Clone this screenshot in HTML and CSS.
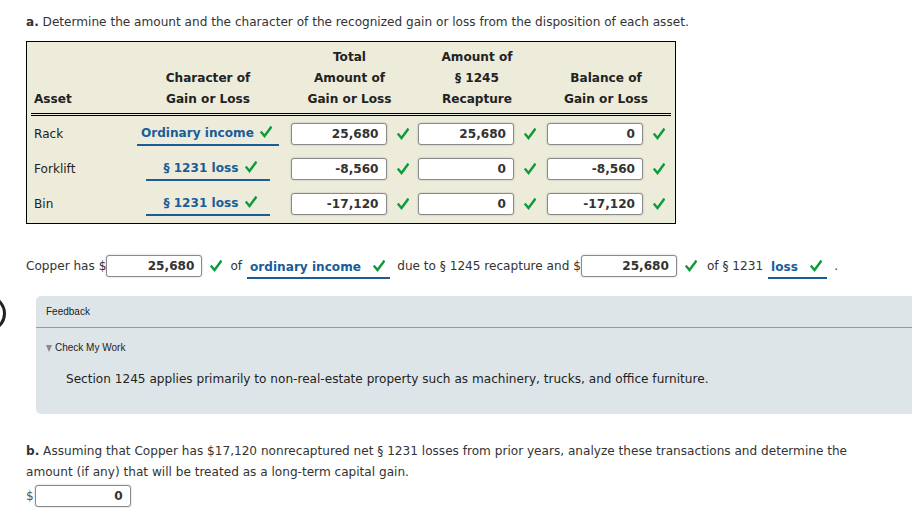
FILE: index.html
```html
<!DOCTYPE html>
<html>
<head>
<meta charset="utf-8">
<link rel="stylesheet" href="styles.css">
</head>
<body>
<div class="ring"></div>
<p class="q"><b>a.</b> Determine the amount and the character of the recognized gain or loss from the disposition of each asset.</p>

<div class="box">
  <table class="grid">
    <colgroup>
      <col class="c1"><col class="c2"><col class="c3"><col class="c4"><col class="c5">
    </colgroup>
    <thead>
      <tr>
        <th class="left"><br><br>Asset</th>
        <th><br>Character of<br>Gain or Loss</th>
        <th>Total<br>Amount of<br>Gain or Loss</th>
        <th>Amount of<br>§ 1245<br>Recapture</th>
        <th><br>Balance of<br>Gain or Loss</th>
      </tr>
    </thead>
    <tbody>
      <tr>
        <td class="left">Rack</td>
        <td><span class="dd wide">Ordinary income <svg class="ck" viewBox="0 0 12 12"><path d="M1.5 6.5 L4.5 10 L10.8 1.5"/></svg></span></td>
        <td><span class="inp">25,680</span><svg class="ck" viewBox="0 0 12 12"><path d="M1.5 6.5 L4.5 10 L10.8 1.5"/></svg></td>
        <td><span class="inp">25,680</span><svg class="ck" viewBox="0 0 12 12"><path d="M1.5 6.5 L4.5 10 L10.8 1.5"/></svg></td>
        <td><span class="inp">0</span><svg class="ck" viewBox="0 0 12 12"><path d="M1.5 6.5 L4.5 10 L10.8 1.5"/></svg></td>
      </tr>
      <tr>
        <td class="left">Forklift</td>
        <td><span class="dd">§ 1231 loss <svg class="ck" viewBox="0 0 12 12"><path d="M1.5 6.5 L4.5 10 L10.8 1.5"/></svg></span></td>
        <td><span class="inp">-8,560</span><svg class="ck" viewBox="0 0 12 12"><path d="M1.5 6.5 L4.5 10 L10.8 1.5"/></svg></td>
        <td><span class="inp">0</span><svg class="ck" viewBox="0 0 12 12"><path d="M1.5 6.5 L4.5 10 L10.8 1.5"/></svg></td>
        <td><span class="inp">-8,560</span><svg class="ck" viewBox="0 0 12 12"><path d="M1.5 6.5 L4.5 10 L10.8 1.5"/></svg></td>
      </tr>
      <tr>
        <td class="left">Bin</td>
        <td><span class="dd">§ 1231 loss <svg class="ck" viewBox="0 0 12 12"><path d="M1.5 6.5 L4.5 10 L10.8 1.5"/></svg></span></td>
        <td><span class="inp">-17,120</span><svg class="ck" viewBox="0 0 12 12"><path d="M1.5 6.5 L4.5 10 L10.8 1.5"/></svg></td>
        <td><span class="inp">0</span><svg class="ck" viewBox="0 0 12 12"><path d="M1.5 6.5 L4.5 10 L10.8 1.5"/></svg></td>
        <td><span class="inp">-17,120</span><svg class="ck" viewBox="0 0 12 12"><path d="M1.5 6.5 L4.5 10 L10.8 1.5"/></svg></td>
      </tr>
    </tbody>
  </table>
</div>

<div class="sentence">
  <span>Copper has $</span><span class="inp">25,680</span><svg class="ck" viewBox="0 0 12 12"><path d="M1.5 6.5 L4.5 10 L10.8 1.5"/></svg>
  <span class="t-of">of</span>
  <span class="dd inline">ordinary income <svg class="ck" viewBox="0 0 12 12"><path d="M1.5 6.5 L4.5 10 L10.8 1.5"/></svg></span>
  <span class="t-due">due to § 1245 recapture and $</span><span class="inp">25,680</span><svg class="ck" viewBox="0 0 12 12"><path d="M1.5 6.5 L4.5 10 L10.8 1.5"/></svg>
  <span class="t-of2">of § 1231</span>
  <span class="dd inline short">loss <svg class="ck" viewBox="0 0 12 12"><path d="M1.5 6.5 L4.5 10 L10.8 1.5"/></svg></span>
  <span class="dot">.</span>
</div>

<div class="feedback">
  <div class="fb-title">Feedback</div>
  <div class="fb-rule"></div>
  <div class="fb-check"><span class="tri"></span>Check My Work</div>
  <p class="fb-text">Section 1245 applies primarily to non-real-estate property such as machinery, trucks, and office furniture.</p>
</div>

<p class="qb"><b>b.</b> Assuming that Copper has $17,120 nonrecaptured net § 1231 losses from prior years, analyze these transactions and determine the amount (if any) that will be treated as a long-term capital gain.</p>
<div class="answer"><span>$</span><span class="inp">0</span></div>
</body>
</html>
```

FILE: styles.css
```css
html { overflow: hidden; }
body {
  margin: 0;
  padding: 12px 0 0 26px;
  font-family: "DejaVu Sans", Verdana, sans-serif;
  font-size: 12.1px;
  color: #333;
  background: #fff;
  position: relative;
}
p { margin: 0; }
.q { line-height: 21px; height: 21px; }
b { font-weight: bold; color: #333; }

.box {
  margin-top: 8px;
  width: 640px;
  border: 1px solid #000;
  background: #edecdb;
  padding: 5px 4px 2px 4px;
}
.grid {
  border-collapse: collapse;
  table-layout: fixed;
  width: 640px;
}
.c1 { width: 99px; }
.c2 { width: 156px; }
.c3 { width: 127px; }
.c4 { width: 128px; }
.c5 { width: 130px; }
.grid th {
  font-weight: bold;
  color: #222;
  text-align: center;
  line-height: 21px;
  padding: 0 0 3px 0;
  border-bottom: 3px double #000;
  vertical-align: bottom;
}
.grid td {
  height: 35px;
  padding: 0;
  text-align: center;
  vertical-align: middle;
  white-space: nowrap;
}
.grid .left { text-align: left; padding-left: 3px; }
.grid td.left { color: #222; }

.inp {
  display: inline-block;
  box-sizing: border-box;
  width: 96px;
  height: 22px;
  line-height: 20px;
  border: 1px solid #8a8a8a;
  border-radius: 3px;
  background: #fff;
  box-shadow: 0 0 2px rgba(0,0,0,0.25);
  text-align: right;
  padding-right: 7px;
  font-weight: bold;
  color: #333;
  vertical-align: middle;
}
.ck {
  width: 12px;
  height: 12px;
  vertical-align: middle;
  margin-left: 10px;
  fill: none;
}
.ck path {
  stroke: #0d9b3a;
  stroke-width: 2.4;
  stroke-linecap: square;
  stroke-linejoin: miter;
}
.dd {
  display: inline-block;
  font-weight: bold;
  color: #1b5c98;
  border-bottom: 2px solid #1b5c98;
  padding: 0 13px 2px 17px;
  line-height: 18px;
  margin-top: 3px;
}
.dd.wide { padding: 0 7px 2px 4px; }
.dd .ck { margin-left: 2px; vertical-align: -1px; }

.sentence {
  margin-top: 30px;
  height: 24px;
  line-height: 24px;
  white-space: nowrap;
  display: flex;
  align-items: center;
}
.sentence .ck { margin-left: 8px; }
.t-of { margin-left: 8px; }
.sentence .dd.inline { padding: 0 5px 2px 3px; margin-left: 5px; margin-top: 6px; line-height: 16px; }
.t-due { margin-left: 7px; }
.t-of2 { margin-left: 10px; }
.sentence .dd.short { padding: 0 5px 2px 3px; }
.dot { margin-left: 7px; }

.ring {
  position: absolute;
  left: -31px;
  top: 295px;
  width: 31px;
  height: 31px;
  border: 3px solid #222;
  border-radius: 50%;
}

.feedback {
  margin: 18px -40px 0 10px;
  background: #dee5e8;
  border-radius: 5px;
  height: 118px;
  font-family: "Liberation Sans", Arial, sans-serif;
  color: #222;
}
.fb-title {
  font-size: 10px;
  padding: 11px 0 0 10px;
  line-height: 10px;
  height: 20px;
}
.fb-rule { height: 1px; background: #999; }
.fb-check {
  font-size: 10px;
  line-height: 12px;
  padding: 14px 0 0 10px;
  display: flex;
  align-items: center;
}
.tri {
  width: 0;
  height: 0;
  border-left: 3px solid transparent;
  border-right: 3px solid transparent;
  border-top: 7px solid #8a8a8a;
  margin-right: 3px;
}
.fb-text {
  font-family: "DejaVu Sans", Verdana, sans-serif;
  font-size: 12.1px;
  color: #222;
  padding: 16px 0 0 30px;
  line-height: 18px;
}

.qb {
  margin-top: 27px;
  line-height: 21px;
  width: 850px;
}
.answer {
  margin-top: 1px;
  display: flex;
  align-items: center;
  height: 24px;
  color: #555;
}
.answer .inp { margin-left: 1px; width: 96px; }
```
